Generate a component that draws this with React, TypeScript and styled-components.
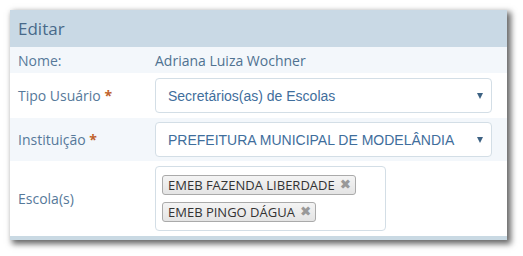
import styled, { createGlobalStyle } from 'styled-components';

const GlobalStyle = createGlobalStyle`
  html, body {
    margin: 0;
    padding: 0;
    background: #ffffff;
  }
  body {
    font-family: 'Open Sans', 'Noto Sans', sans-serif;
  }
`;

const schools = ['EMEB FAZENDA LIBERDADE', 'EMEB PINGO DÁGUA'];

const App = () => {
  return (
    <Page>
      <GlobalStyle />
      <Panel>
        <Header>Editar</Header>
        <Row $striped $height="26px">
          <Label>Nome:</Label>
          <Value>
            <PlainText>Adriana Luiza Wochner</PlainText>
          </Value>
        </Row>
        <Row $pad="5px">
          <Label>
            Tipo Usuário <Required>*</Required>
          </Label>
          <Value>
            <Select>
              <span>Secretários(as) de Escolas</span>
              <Caret />
            </Select>
          </Value>
        </Row>
        <Row $striped $pad="4px">
          <Label>
            Instituição <Required>*</Required>
          </Label>
          <Value>
            <Select>
              <span>PREFEITURA MUNICIPAL DE MODELÂNDIA</span>
              <Caret />
            </Select>
          </Value>
        </Row>
        <Row $pad="5px">
          <Label>Escola(s)</Label>
          <Value>
            <TagBox>
              {schools.map((s) => (
                <Tag key={s}>
                  {s}
                  <TagClose>✖</TagClose>
                </Tag>
              ))}
            </TagBox>
          </Value>
        </Row>
      </Panel>
    </Page>
  );
};

const Page = styled.div`
  padding: 10px 16px 16px 10px;
  width: 523px;
  box-sizing: border-box;
`;

const Panel = styled.div`
  width: 497px;
  background: #ffffff;
  border-bottom: 4px solid #c9d9e3;
  box-shadow: 3px 3px 6px 1px rgba(0, 0, 0, 0.6);
`;

const Header = styled.div`
  height: 37px;
  display: flex;
  align-items: center;
  padding: 0 8px;
  background: #c9d9e5;
  color: #48698a;
  font-size: 17px;
`;

const Row = styled.div<{ $striped?: boolean; $pad?: string; $height?: string }>`
  display: flex;
  align-items: center;
  background: ${(p) => (p.$striped ? '#f3f7fb' : '#ffffff')};
  padding: ${(p) => p.$pad || '0'} 15px ${(p) => p.$pad || '0'} 0;
  height: ${(p) => p.$height || 'auto'};
`;

const Label = styled.div`
  width: 145px;
  padding-left: 8px;
  box-sizing: border-box;
  color: #56799a;
  font-size: 14px;
  flex-shrink: 0;
`;

const Required = styled.span`
  color: #c0622c;
  font-weight: bold;
`;

const Value = styled.div`
  flex: 1;
  min-width: 0;
`;

const PlainText = styled.div`
  color: #4f7291;
  font-size: 14px;
`;

const Select = styled.div`
  height: 35px;
  box-sizing: border-box;
  border: 1px solid #d3dee6;
  border-radius: 4px;
  background: #ffffff;
  display: flex;
  align-items: center;
  justify-content: space-between;
  padding: 0 8px 0 12px;
  font-family: 'Liberation Sans', Arial, sans-serif;
  font-size: 14px;
  color: #3f6e9c;
`;

const Caret = styled.span`
  width: 0;
  height: 0;
  border-left: 3.5px solid transparent;
  border-right: 3.5px solid transparent;
  border-top: 6px solid #3d6283;
`;

const TagBox = styled.div`
  width: 231px;
  box-sizing: border-box;
  border: 1px solid #d3dee6;
  border-radius: 4px;
  padding: 8px 6px;
  display: flex;
  flex-direction: column;
  align-items: flex-start;
  gap: 7px;
`;

const Tag = styled.div`
  height: 20px;
  box-sizing: border-box;
  display: inline-flex;
  align-items: center;
  gap: 5px;
  padding: 0 4px 0 5px;
  border: 1px solid #aaaaaa;
  border-radius: 3px;
  background: linear-gradient(#f4f4f4, #e4e4e4);
  color: #333333;
  font-size: 13px;
  white-space: nowrap;
`;

const TagClose = styled.span`
  color: #999999;
  font-size: 13.5px;
  line-height: 1;
  font-family: 'DejaVu Sans', sans-serif;
`;

export default App;
